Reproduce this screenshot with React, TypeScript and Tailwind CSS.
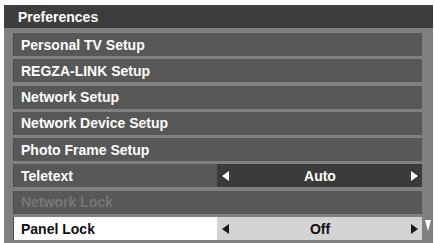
import React from "react";

type Row = {
  label: string;
  value?: string;
  state?: "normal" | "disabled" | "selected";
};

const rows: Row[] = [
  { label: "Personal TV Setup" },
  { label: "REGZA-LINK Setup" },
  { label: "Network Setup" },
  { label: "Network Device Setup" },
  { label: "Photo Frame Setup" },
  { label: "Teletext", value: "Auto" },
  { label: "Network Lock", state: "disabled" },
  { label: "Panel Lock", value: "Off", state: "selected" },
];

const Arrow = ({ dir, color }: { dir: "left" | "right" | "down"; color: string }) => {
  if (dir === "down") {
    return (
      <svg width="6" height="11" viewBox="0 0 6 11">
        <polygon points="0,0 6,0 3,11" fill={color} />
      </svg>
    );
  }
  return (
    <svg width="7" height="10" viewBox="0 0 7 10">
      {dir === "left" ? (
        <polygon points="7,0 7,10 0,5" fill={color} />
      ) : (
        <polygon points="0,0 0,10 7,5" fill={color} />
      )}
    </svg>
  );
};

const MenuRow = ({ row }: { row: Row }) => {
  const selected = row.state === "selected";
  const labelCls = selected
    ? "bg-white text-[#111]"
    : row.state === "disabled"
    ? "bg-[#585858] text-[#767676]"
    : "bg-[#585858] text-white";

  if (!row.value) {
    return (
      <div className={`h-[23px] flex items-center pl-[7px] border-l border-[#4a4a4a] ${labelCls}`}>
        {row.label}
      </div>
    );
  }

  return (
    <div className="h-[23px] flex">
      <div className={`w-[204px] flex items-center pl-[7px] border-l border-[#4a4a4a] ${labelCls}`}>
        {row.label}
      </div>
      <div
        className={`flex-1 flex items-center justify-between pl-[5px] pr-[4px] ${
          selected ? "bg-[#d3d3d3] text-[#111]" : "bg-[#3b3b3b] text-white"
        }`}
      >
        <Arrow dir="left" color={selected ? "#1a1a1a" : "#ffffff"} />
        <span>{row.value}</span>
        <Arrow dir="right" color={selected ? "#1a1a1a" : "#ffffff"} />
      </div>
    </div>
  );
};

export default function App() {
  return (
    <div
      className="w-[434px] h-[243px] bg-white pt-[5px] pl-[4px] pr-[1px] overflow-hidden text-[14px] font-bold leading-none"
      style={{ fontFamily: '"Liberation Sans", Arial, sans-serif' }}
    >
      <div className="h-full bg-[#808080] flex flex-col">
        <div className="h-[23px] bg-[#3d3d3d] text-white flex items-center pl-[14px] shrink-0">
          Preferences
        </div>
        <div className="flex pt-[5px] pl-[9px]">
          <div className="w-[409px] flex flex-col gap-[3.3px]">
            {rows.map((r) => (
              <MenuRow key={r.label} row={r} />
            ))}
          </div>
          <div className="flex-1 flex flex-col justify-end items-center">
            <div className="mb-[9px]">
              <Arrow dir="down" color="#ffffff" />
            </div>
          </div>
        </div>
      </div>
    </div>
  );
}
